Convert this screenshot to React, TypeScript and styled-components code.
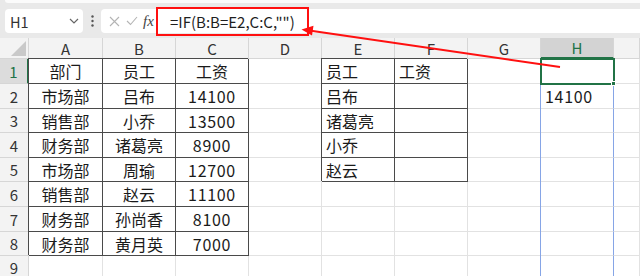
import React from 'react';
import styled, { createGlobalStyle, css } from 'styled-components';

const GlobalStyle = createGlobalStyle`
  html, body {
    margin: 0;
    padding: 0;
    background: #ffffff;
  }
  body {
    font-family: "Noto Sans CJK SC", "Noto Sans", sans-serif;
    color: #222;
  }
`;

const GREEN = '#217346';
const BLUE = '#86a5e6';
const GRID = '#e2e2e2';
const HEAD_LINE = '#d6d6d6';
const DARK = '#4a4a4a';

const Window = styled.div`
  position: relative;
  width: 640px;
  height: 276px;
  overflow: hidden;
  background: #fff;
`;

const Toolbar = styled.div`
  position: relative;
  height: 38px;
  background: #e9e9e9;
  display: flex;
  align-items: center;
  padding-left: 5px;
  box-sizing: border-box;
`;

const RibbonEdge = styled.div`
  position: absolute;
  left: 5px;
  right: -6px;
  top: 0;
  height: 3px;
  background: #fbfbfb;
  border-radius: 0 0 4px 4px;
`;

const NameBox = styled.div`
  width: 78px;
  height: 24px;
  margin-top: 4px;
  background: #fff;
  border-radius: 4px;
  display: flex;
  align-items: center;
  justify-content: space-between;
  padding: 0 4px 0 5px;
  box-sizing: border-box;
  font-size: 14.5px;
  color: #333;
`;

const Grip = styled.div`
  width: 18px;
  display: flex;
  justify-content: center;
  margin-top: 4px;
`;

const FormulaInput = styled.div`
  flex: 1;
  height: 24px;
  margin-top: 4px;
  margin-right: -8px;
  background: #fff;
  border-radius: 4px 0 0 4px;
  display: flex;
  align-items: center;
  padding-left: 4px;
`;

const ActionIcon = styled.span`
  width: 18px;
  height: 24px;
  display: flex;
  align-items: center;
  justify-content: center;
`;

const Fx = styled.span`
  font-family: "Liberation Serif", "DejaVu Serif", serif;
  font-style: italic;
  font-size: 15px;
  color: #444;
  margin-left: 2px;
  width: 16px;
`;

const FormulaText = styled.div`
  height: 29px;
  width: 153px;
  box-sizing: border-box;
  border: 2.5px solid #ff1010;
  margin-left: -3px;
  display: flex;
  align-items: center;
  padding-left: 12px;
  font-size: 15px;
  color: #1f1f1f;
  white-space: nowrap;
`;

const Sheet = styled.div`
  display: grid;
  grid-template-columns: 29px 74px repeat(7, 73px) 1fr;
  grid-template-rows: 21px 25px 25px 24px 25px 24px 25px 25px 24px 23px;
`;

const headCell = css`
  background: #f3f3f3;
  border-right: 1px solid ${HEAD_LINE};
  border-bottom: 1px solid ${HEAD_LINE};
  display: flex;
  align-items: center;
  justify-content: center;
  font-size: 15px;
  color: #333;
  box-sizing: border-box;
`;

const Corner = styled.div`
  ${headCell};
  position: relative;
  &::after {
    content: '';
    position: absolute;
    right: 2px;
    bottom: 2px;
    width: 15px;
    height: 15px;
    background: #c9c9c9;
    clip-path: polygon(100% 0, 100% 100%, 0 100%);
  }
`;

const ColHeader = styled.div<{ $active?: boolean }>`
  ${headCell};
  ${p =>
    p.$active &&
    css`
      background: #d3d3d3;
      color: ${GREEN};
      border-bottom: 2px solid ${GREEN};
    `}
`;

const RowHeader = styled.div<{ $active?: boolean }>`
  ${headCell};
  ${p =>
    p.$active &&
    css`
      background: #dcdcdc;
      color: ${GREEN};
      border-right: 2px solid ${GREEN};
    `}
`;

const Cell = styled.div<{
  $align: 'center' | 'left';
  $boxed?: boolean;
  $ranged?: boolean;
  $selected?: boolean;
}>`
  position: relative;
  box-sizing: border-box;
  border-right: 1px solid ${GRID};
  border-bottom: 1px solid ${GRID};
  display: flex;
  align-items: center;
  justify-content: ${p => (p.$align === 'center' ? 'center' : 'flex-start')};
  padding-left: ${p => (p.$align === 'center' ? '0' : '4px')};
  font-size: 16px;
  color: #1a1a1a;
  white-space: nowrap;

  ${p =>
    p.$boxed &&
    css`
      border-right-color: ${DARK};
      border-bottom-color: ${DARK};
      box-shadow: -1px -1px 0 0 ${DARK};
    `}

  ${p =>
    p.$ranged &&
    css`
      border-right-color: ${BLUE};
      box-shadow: -1px 0 0 0 ${BLUE};
    `}

  ${p =>
    p.$selected &&
    css`
      z-index: 2;
      outline: 2px solid ${GREEN};
      outline-offset: -1px;
      &::after {
        content: '';
        position: absolute;
        right: -3px;
        bottom: -3px;
        width: 5px;
        height: 5px;
        background: ${GREEN};
        border: 1px solid #fff;
        box-sizing: border-box;
      }
    `}
`;

const Number = styled.span`
  letter-spacing: 0.7px;
`;

const ArrowLayer = styled.svg`
  position: absolute;
  left: 0;
  top: 0;
  pointer-events: none;
  z-index: 5;
`;

const COLUMNS = ['A', 'B', 'C', 'D', 'E', 'F', 'G', 'H', ''];

const DATA: string[][] = [
  ['部门', '员工', '工资', '', '员工', '工资', '', '', ''],
  ['市场部', '吕布', '14100', '', '吕布', '', '', '14100', ''],
  ['销售部', '小乔', '13500', '', '诸葛亮', '', '', '', ''],
  ['财务部', '诸葛亮', '8900', '', '小乔', '', '', '', ''],
  ['市场部', '周瑜', '12700', '', '赵云', '', '', '', ''],
  ['销售部', '赵云', '11100', '', '', '', '', '', ''],
  ['财务部', '孙尚香', '8100', '', '', '', '', '', ''],
  ['财务部', '黄月英', '7000', '', '', '', '', '', ''],
  ['', '', '', '', '', '', '', '', ''],
];

const isBoxed = (r: number, c: number) =>
  (c <= 2 && r <= 7) || ((c === 4 || c === 5) && r <= 4);

const renderValue = (v: string) => (/^\d+$/.test(v) ? <Number>{v}</Number> : v);

export default function App() {
  return (
    <Window>
      <GlobalStyle />
      <Toolbar>
        <RibbonEdge />
        <NameBox>
          <span>H1</span>
          <svg width="10" height="6" viewBox="0 0 10 6">
            <path d="M1 1 L5 5 L9 1" fill="none" stroke="#666" strokeWidth="1.2" />
          </svg>
        </NameBox>
        <Grip>
          <svg width="3" height="12" viewBox="0 0 3 12">
            <circle cx="1.5" cy="1.5" r="1.2" fill="#555" />
            <circle cx="1.5" cy="6" r="1.2" fill="#555" />
            <circle cx="1.5" cy="10.5" r="1.2" fill="#555" />
          </svg>
        </Grip>
        <FormulaInput>
          <ActionIcon>
            <svg width="11" height="11" viewBox="0 0 11 11">
              <path d="M1 1 L10 10 M10 1 L1 10" stroke="#b4b4b4" strokeWidth="1.1" />
            </svg>
          </ActionIcon>
          <ActionIcon>
            <svg width="12" height="10" viewBox="0 0 12 10">
              <path d="M1 5 L4.5 8.5 L11 1" fill="none" stroke="#b4b4b4" strokeWidth="1.1" />
            </svg>
          </ActionIcon>
          <Fx>fx</Fx>
          <FormulaText>=IF(B:B=E2,C:C,"")</FormulaText>
        </FormulaInput>
      </Toolbar>

      <Sheet>
        <Corner />
        {COLUMNS.map((c, i) => (
          <ColHeader key={i} $active={c === 'H'}>
            {c}
          </ColHeader>
        ))}
        {DATA.map((row, r) => (
          <React.Fragment key={r}>
            <RowHeader $active={r === 0}>{r + 1}</RowHeader>
            {row.map((v, c) => (
              <Cell
                key={c}
                $align={c <= 2 ? 'center' : 'left'}
                $boxed={isBoxed(r, c)}
                $ranged={c === 7 && r > 0}
                $selected={c === 7 && r === 0}
              >
                {renderValue(v)}
              </Cell>
            ))}
          </React.Fragment>
        ))}
      </Sheet>

      <ArrowLayer width="640" height="276" viewBox="0 0 640 276">
        <line x1="560" y1="67" x2="311" y2="30.8" stroke="#ff1010" strokeWidth="2" />
        <polygon points="301.5,29.5 313.5,25.8 312,35.5" fill="#ff1010" />
      </ArrowLayer>
    </Window>
  );
}
